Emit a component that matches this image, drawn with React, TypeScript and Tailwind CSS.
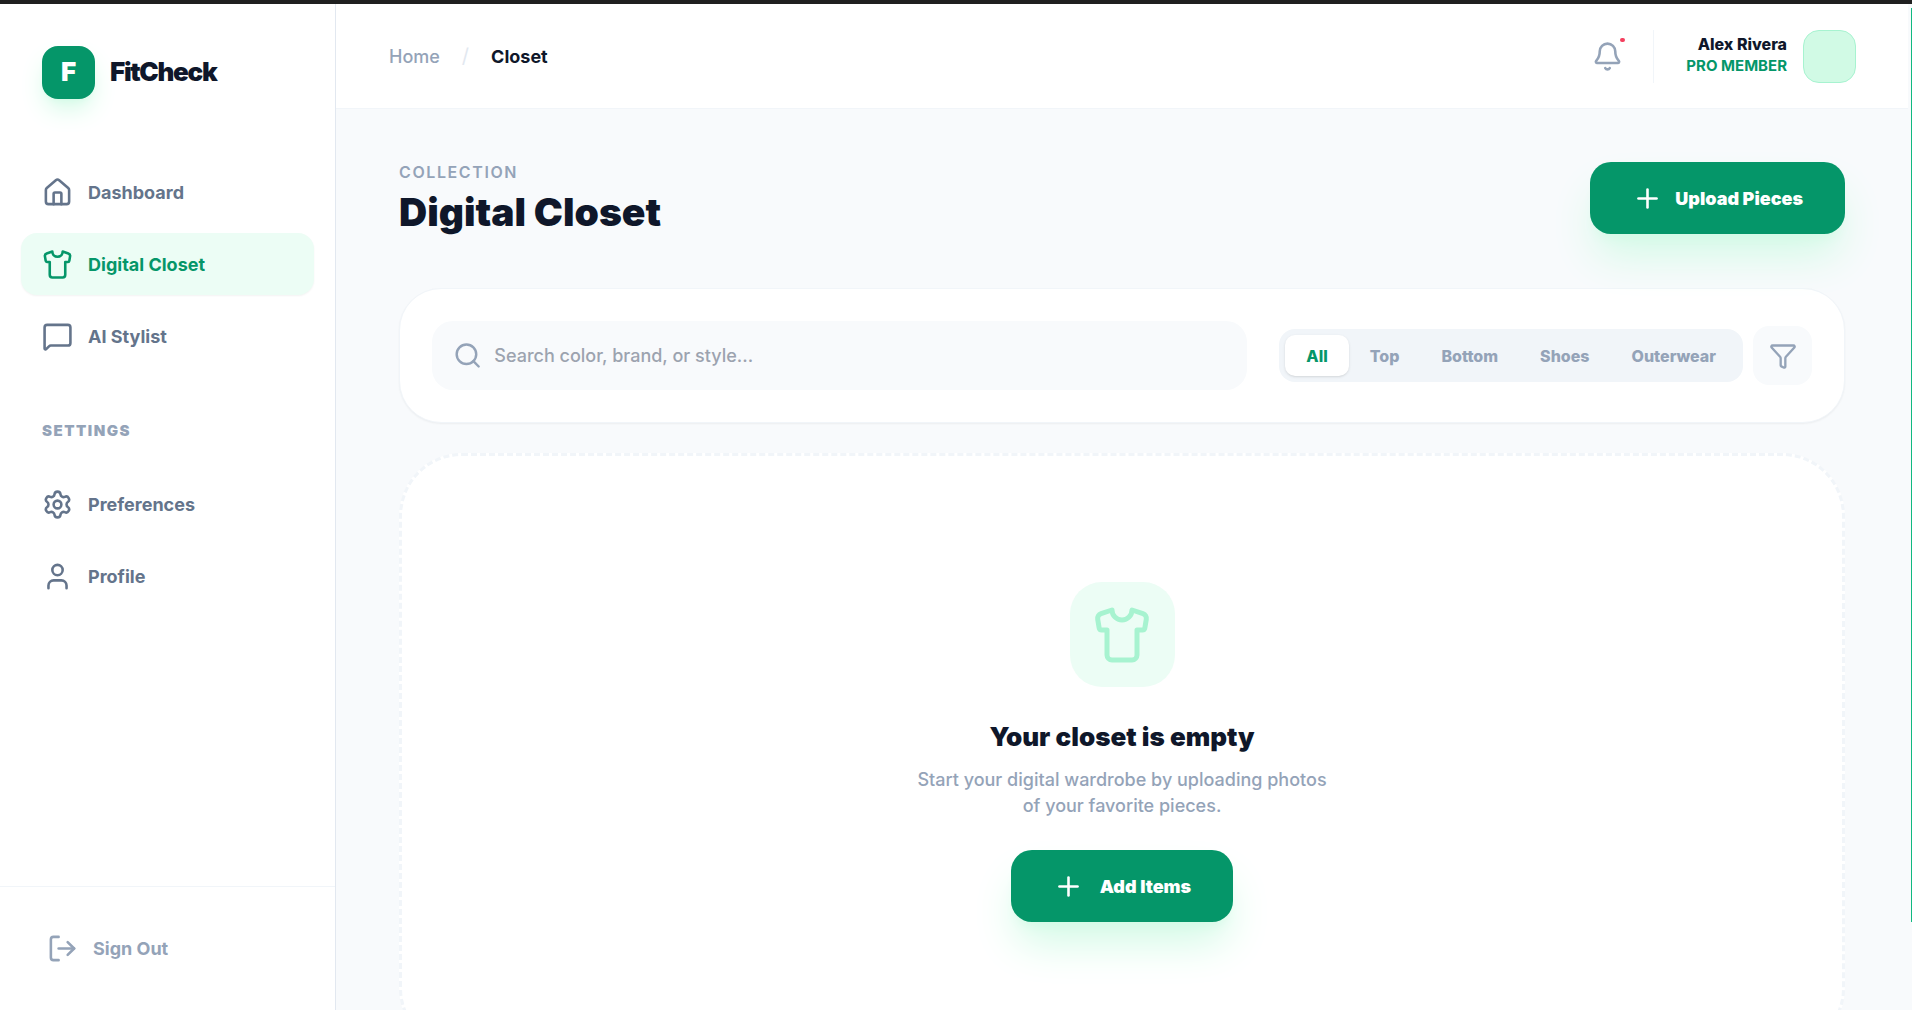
import { useState } from "react";
import type { ReactNode } from "react";
import { Bell, Funnel, House, LogOut, MessageSquare, Plus, Search, Settings, Shirt, User } from "lucide-react";
import type { LucideIcon } from "lucide-react";

type NavEntry = { label: string; icon: LucideIcon; active?: boolean };

const mainNav: NavEntry[] = [
  { label: "Dashboard", icon: House },
  { label: "Digital Closet", icon: Shirt, active: true },
  { label: "AI Stylist", icon: MessageSquare },
];

const settingsNav: NavEntry[] = [
  { label: "Preferences", icon: Settings },
  { label: "Profile", icon: User },
];

const categories = ["All", "Top", "Bottom", "Shoes", "Outerwear"];

function NavItem({ label, icon: Icon, active }: NavEntry) {
  return (
    <a
      href="#"
      aria-current={active ? "page" : undefined}
      className={
        "flex h-[62px] items-center gap-[15px] rounded-2xl px-[21px] text-[18px] font-bold " +
        (active ? "bg-[#ecfdf5] text-[#059669] shadow-xs" : "text-[#64748b]")
      }
    >
      <Icon size={31} />
      {label}
    </a>
  );
}

function Sidebar() {
  return (
    <aside className="flex w-[336px] shrink-0 flex-col border-r border-[#e2e8f0] bg-white">
      <div className="flex items-center gap-[15px] px-[42px] pt-[42px]">
        <div className="flex size-[53px] items-center justify-center rounded-2xl bg-[#059669] pb-[2px] text-[26px] leading-9 font-black text-white shadow-[0_13px_26px_-4px_#d1fae5,0_5px_8px_-5px_#d1fae5]">
          F
        </div>
        <span className="pb-[2px] text-[26px] leading-9 font-black tracking-tighter text-[#0f172a]">FitCheck</span>
      </div>
      <nav className="mt-[62px] flex flex-1 flex-col gap-[10px] px-[21px]">
        {mainNav.map((item) => (
          <NavItem key={item.label} {...item} />
        ))}
        <h2 className="mt-[44px] mb-[22px] px-[21px] text-[15px] leading-5 font-black tracking-widest text-[#94a3b8]">
          SETTINGS
        </h2>
        {settingsNav.map((item) => (
          <NavItem key={item.label} {...item} />
        ))}
      </nav>
      <div className="border-t border-[#f1f5f9] px-[21px] py-8">
        <button type="button" className="flex h-[59px] w-full items-center gap-[15px] px-[26px] text-[18px] font-bold text-[#94a3b8]">
          <LogOut size={31} />
          Sign Out
        </button>
      </div>
    </aside>
  );
}

function Header() {
  return (
    <header className="flex h-[105px] shrink-0 items-center justify-between border-b border-[#f1f5f9] bg-white pr-[52px] pl-[53px]">
      <nav aria-label="Breadcrumb" className="flex items-center gap-[22px] text-[18px]">
        <a href="#" className="font-medium text-[#94a3b8]">Home</a>
        <span className="text-[20px] text-[#e2e8f0]">/</span>
        <span className="font-bold text-[#0f172a]">Closet</span>
      </nav>
      <div className="flex items-center">
        <button type="button" aria-label="Notifications" className="relative p-[15px] text-[#94a3b8]">
          <Bell size={31} />
          <span className="absolute top-3 right-[13px] h-1 w-[5px] rounded-full bg-[#f43f5e]" />
        </button>
        <div className="ml-[15px] flex items-center gap-4 border-l border-[#f1f5f9] pl-8">
          <div className="pb-[2px] text-right">
            <p className="text-[16px] leading-[21px] font-extrabold text-[#0f172a]">Alex Rivera</p>
            <p className="text-[15px] leading-[21px] font-bold text-[#059669]">PRO MEMBER</p>
          </div>
          <div className="size-[53px] rounded-2xl border border-[#a7f3d0] bg-[#d1fae5]" />
        </div>
      </div>
    </header>
  );
}

function PrimaryButton({ children, className }: { children: ReactNode; className: string }) {
  return (
    <button
      type="button"
      className={
        "flex h-[72px] items-center rounded-[21px] bg-[#059669] px-[42px] text-[18px] font-black text-white shadow-[0_26px_44px_-6px_#d1fae5,0_10px_13px_-8px_#d1fae5] " +
        className
      }
    >
      <Plus size={31} />
      {children}
    </button>
  );
}

function FilterBar() {
  const [selected, setSelected] = useState("All");
  return (
    <section className="flex items-center gap-8 rounded-[42px] border border-[#f1f5f9] bg-white px-8 py-8 shadow-xs">
      <label className="flex h-[69px] flex-1 items-center gap-3 rounded-[21px] bg-[#f8fafc] px-[21px] text-[#94a3b8]">
        <Search size={31} />
        <input
          type="text"
          aria-label="Search closet"
          placeholder="Search color, brand, or style..."
          className="w-full bg-transparent text-[18px] font-medium text-[#0f172a] outline-none placeholder:text-[#9ca3af]"
        />
      </label>
      <div className="flex items-center gap-[10px]">
        <div className="flex rounded-2xl bg-[#f1f5f9] p-[6px]">
          {categories.map((name) => (
            <button
              key={name}
              type="button"
              aria-pressed={selected === name}
              onClick={() => setSelected(name)}
              className={
                "h-[41px] rounded-[10px] px-[21px] text-[16px] font-extrabold " +
                (selected === name ? "bg-white text-[#059669] shadow-sm" : "text-[#94a3b8]")
              }
            >
              {name}
            </button>
          ))}
        </div>
        <button type="button" aria-label="Filters" className="flex size-[59px] items-center justify-center rounded-2xl bg-[#f8fafc] text-[#94a3b8]">
          <Funnel size={28} />
        </button>
      </div>
    </section>
  );
}

export default function App() {
  return (
    <div className="flex h-screen flex-col overflow-hidden border-t-4 border-[#202020] bg-[#f8fafc] font-['Inter',sans-serif]">
      <div className="flex min-h-0 flex-1">
        <Sidebar />
        <div className="flex min-w-0 flex-1 flex-col">
          <Header />
          <main className="min-h-0 flex-1 overflow-hidden px-[63px] pt-[53px]">
            <div className="flex items-start justify-between">
              <div>
                <p className="text-[16px] leading-5 font-semibold tracking-widest text-[#94a3b8]">COLLECTION</p>
                <h1 className="mt-2 text-[39px] leading-[44px] font-black text-[#0f172a]">Digital Closet</h1>
              </div>
              <PrimaryButton className="gap-3">Upload Pieces</PrimaryButton>
            </div>
            <div className="mt-[54px]">
              <FilterBar />
            </div>
            <section className="mt-[30px] flex flex-col items-center rounded-[63px] border-3 border-dashed border-[#f1f5f9] bg-white py-[126px]">
              <div className="flex size-[105px] items-center justify-center rounded-[32px] bg-[#ecfdf5] text-[#a7f3d0]">
                <Shirt size={60} />
              </div>
              <h2 className="mt-8 text-[26px] leading-9 font-black text-[#0f172a]">Your closet is empty</h2>
              <p className="mt-3 mb-[31px] w-[420px] text-center text-[18px] leading-[26px] font-medium text-[#94a3b8]">
                Start your digital wardrobe by uploading photos of your favorite pieces.
              </p>
              <PrimaryButton className="gap-4">Add Items</PrimaryButton>
            </section>
          </main>
        </div>
        <div className="flex w-1 shrink-0 flex-col items-end pt-1 pb-22">
          <div className="w-px flex-1 bg-[#10b981]" />
        </div>
      </div>
    </div>
  );
}
